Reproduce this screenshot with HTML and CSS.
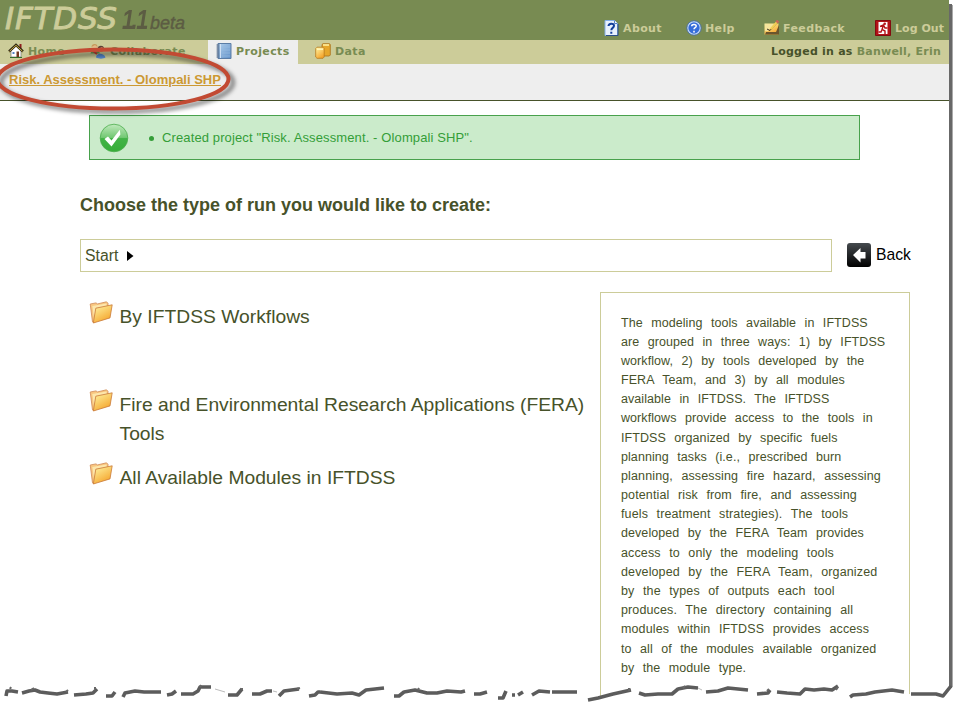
FILE: index.html
```html
<!DOCTYPE html>
<html lang="en">
<head>
<meta charset="utf-8">
<title>IFTDSS - Projects</title>
<link rel="stylesheet" href="styles.css">
</head>
<body>
<svg width="0" height="0" class="defs" aria-hidden="true">
  <defs>
    <linearGradient id="gold" x1="0" y1="0" x2=".6" y2="1"><stop offset="0" stop-color="#fff8a8"/><stop offset="1" stop-color="#f5a52c"/></linearGradient>
    <linearGradient id="ok" x1="0" y1="0" x2="0" y2="1"><stop offset="0" stop-color="#c0eabd"/><stop offset=".48" stop-color="#73c873"/><stop offset=".52" stop-color="#42b346"/><stop offset="1" stop-color="#36ad38"/></linearGradient>
    <linearGradient id="dark" x1="0" y1="0" x2="0" y2="1"><stop offset="0" stop-color="#454a4e"/><stop offset="1" stop-color="#000"/></linearGradient>
    <linearGradient id="blue" x1="0" y1="0" x2="1" y2="1"><stop offset="0" stop-color="#b3d0ec"/><stop offset="1" stop-color="#5f8fc8"/></linearGradient>
    <symbol id="folder" viewBox="0 0 24 24">
      <path d="M1.200 4 7 2.900l1.500 1L17.500 1.800l1.500 1.500V6L5 22.700l-1.500-.8z" fill="#f8c680" stroke="#cf8a55" stroke-width=".8"/>
      <path d="M3.300 6 17.500 3.500l.2 3L7 8 5 18z" fill="#fde7ac"/>
      <path d="M6.800 8.200 23.200 4.800 21 17.900 4.300 23z" fill="url(#gold)" stroke="#c97a3a" stroke-width=".8"/>
    </symbol>
  </defs>
</svg>
<div class="page">
  <header class="top">
    <div class="brand"><span class="name">IFTDSS</span><span class="ver">1<i>.</i>1</span><span class="beta">beta</span></div>
    <nav class="tools">
      <a class="about"><svg width="16" height="16" viewBox="0 0 16 16"><path d="M1 .5h9.500l3 3v12H1z" fill="#e8f1fd" stroke="#84aee6"/><path d="M10.500.5v3h3" fill="#fff" stroke="#5580c0"/><path d="M14 4v11.600H2" fill="none" stroke="#24477f"/><path d="M4.500 6C4.600 3 10 2.800 10 5.800 10 8 7.300 7.700 7.300 10.200M7.300 11.800v2" fill="none" stroke="#123f9c" stroke-width="2"/></svg>About</a>
      <a class="help"><svg width="16" height="16" viewBox="0 0 16 16"><circle cx="8" cy="8" r="6.300" fill="#356ddb" stroke="#c7dcf8" stroke-width="1.300"/><circle cx="8" cy="8" r="7.200" fill="none" stroke="#3b67bb" stroke-width=".7"/><path d="M5.700 6.200C5.900 3.800 10.300 4 10.200 6.200 10.100 7.800 8 7.500 8 9.300M8 10.800v1.600" fill="none" stroke="#fff" stroke-width="1.500"/></svg>Help</a>
      <a class="feedback"><svg width="16" height="16" viewBox="0 0 16 16"><path d="M.5 3.500h14v11H.5z" fill="url(#gold)"/><path d="M1 14.500h14V5l-3 7H2z" fill="#6b552d"/><path d="M1 4h9L4 11H1z" fill="#f6e59c"/><path d="m3 9 3 1.500L14 2" fill="none" stroke="#3d331d"/><path d="m7 9 6-7" stroke="#f1cf55" stroke-width="2"/><path d="m12.500 2.500 1.700-1.800" stroke="#ca6656" stroke-width="3"/></svg>Feedback</a>
      <a class="logout"><svg width="16" height="16" viewBox="0 0 16 16"><path d="M.5.5h15v15H.5z" fill="#b31217" stroke="#820b0f"/><path d="M3.500 2h9v12h-9z" fill="#fff"/><circle cx="9.700" cy="3.800" r="1.300" fill="#b31217"/><path d="M5 6.500 8.500 5l1.500 3h2.500M8.400 5.500 7 9.500l3 1.500v3M7.200 9 6 12H3.500" fill="none" stroke="#b31217" stroke-width="1.400"/></svg>Log Out</a>
    </nav>
  </header>
  <div class="menu">
    <nav class="tabs">
      <a class="tab home"><svg width="16" height="16" viewBox="0 0 16 16"><path d="M11.500 1h2v5h-2z" fill="#8d1c1c"/><path d="M3 7.500 8 3l5 4.500V14H3z" fill="#fff" stroke="#777" stroke-width=".7"/><path d="M1 8.500 8 2l7 6.500" fill="none" stroke="#332c16" stroke-width="2.400"/><path d="M1.500 8.300 8 2.300l6.500 6" fill="none" stroke="#ebc74d" stroke-width=".8"/><path d="M4.500 9h2v2h-2z" fill="#5482c0"/><path d="M8.500 8.500H11V14H8.500z" fill="#71371f"/><path d="M2 14.500h12" stroke="#326c27"/></svg>Home</a>
      <a class="tab collab"><svg width="16" height="16" viewBox="0 0 16 16"><path d="M.5 10.500 2 6h6l2 4.500z" fill="#679b50"/><circle cx="4.500" cy="4" r="3" fill="#e2b988"/><path d="M1.500 4C1.500 0 8 0 7.500 4L5 2z" fill="#c29a5c"/><path d="M6 14.500c0-5 8-5 9.500 0-2 1.500-7 1.500-9.500 0" fill="#5789ce"/><circle cx="10.800" cy="6" r="3" fill="#c9865c"/><path d="M7.500 6c0-4.500 7-4.500 6.500 0l-2-2z" fill="#5b4238"/><path d="m3 8 4 3" stroke="#c23e34" stroke-width="2"/></svg>Collaborate</a>
      <a class="tab projects"><svg width="16" height="16" viewBox="0 0 16 16"><path d="M2 .5h13v15H2z" fill="url(#blue)" stroke="#5c7da5"/><path d="M4.500 1v14" stroke="#d1e1f4"/><path d="M6 4h8M6 7h8M6 10h8M6 13h8" stroke="#9abce0" stroke-width=".7"/><path d="M.5 2h3M.5 4h3M.5 6h3M.5 8h3M.5 10h3M.5 12h3M.5 14h3" stroke="#526987"/></svg>Projects</a>
      <a class="tab data"><svg width="16" height="16" viewBox="0 0 16 16"><path d="M7 1.500 8 .7h6.500l.8 1V12l-1 1H7z" fill="#e6a72b" stroke="#a8701c" stroke-width=".8"/><path d="M8 2h6" stroke="#fff0a0" stroke-width="1.600"/><path d="M.7 5.500 2 4.200h6l1.200 1.300V14L8 15.300H2L.7 14z" fill="url(#gold)" stroke="#b8781d" stroke-width=".8"/><path d="M2 6.200h6" stroke="#fff7bb" stroke-width="1.500"/></svg>Data</a>
    </nav>
    <div class="user">Logged in as <span>Banwell, Erin</span></div>
  </div>
  <div class="crumb"><a>Risk. Assessment. - Olompali SHP</a></div>
  <main>
    <div class="notice">
      <svg width="30" height="30" viewBox="0 0 30 30"><circle cx="15" cy="15" r="13.800" fill="url(#ok)" stroke="#4bad4c" stroke-width=".8"/><path d="M5.500 16 9 13.500l3.500 4L20.800 6.800l.6 4.700-8.900 12z" fill="#fff"/></svg>
      <span class="dot"></span><span class="msg">Created project "Risk. Assessment. - Olompali SHP".</span>
    </div>
    <h1>Choose the type of run you would like to create:</h1>
    <div class="path-row">
      <div class="path"><span>Start</span><svg width="8" height="12" viewBox="0 0 8 12"><path d="M1 1 7.500 6 1 11z" fill="#000"/></svg></div>
      <a class="back"><svg width="24" height="24" viewBox="0 0 24 24"><rect width="24" height="24" rx="3" fill="url(#dark)"/><path d="m6 12 7.500-7v4H18.500v6.500H13.500v4z" fill="#fff"/></svg><span>Back</span></a>
    </div>
    <div class="columns">
      <ul class="runs">
        <li class="first"><svg width="24" height="24"><use href="#folder"/></svg><span>By IFTDSS Workflows</span></li>
        <li class="second"><svg width="24" height="24"><use href="#folder"/></svg><span>Fire and Environmental Research Applications (FERA)<br>Tools</span></li>
        <li class="third"><svg width="24" height="24"><use href="#folder"/></svg><span>All Available Modules in IFTDSS</span></li>
      </ul>
      <aside>The modeling tools available in IFTDSS<br>are grouped in three ways: 1) by IFTDSS<br>workflow, 2) by tools developed by the<br>FERA Team, and 3) by all modules<br>available in IFTDSS. The IFTDSS<br>workflows provide access to the tools in<br>IFTDSS organized by specific fuels<br>planning tasks (i.e., prescribed burn<br><span class="wide">planning, assessing fire hazard, assessing</span><br><span class="wide">potential risk from fire, and assessing</span><br><span class="wide">fuels treatment strategies). The tools</span><br>developed by the FERA Team provides<br><span class="wide">access to only the modeling tools</span><br><span class="wide">developed by the FERA Team, organized</span><br><span class="wide">by the types of outputs each tool</span><br><span class="wide">produces. The directory containing all</span><br><span class="wide">modules within IFTDSS provides access</span><br>to all of the modules available organized<br>by the module type.</aside>
    </div>
  </main>
</div>
<svg class="overlay" width="957" height="708" viewBox="0 0 957 708" aria-hidden="true">
  <defs>
    <filter id="soft" x="-10%" y="-30%" width="120%" height="170%"><feGaussianBlur stdDeviation="2"/></filter>
    <filter id="edge" x="-5%" y="-50%" width="110%" height="200%"><feGaussianBlur stdDeviation=".65"/></filter>
  </defs>
  <path d="M949 4h3v684h-3z" fill="#686868"/><path d="M952.500 5v682" stroke="#aaa"/>
  <path d="M0 690 20 691 50 692 75 694 100 690 125 693 160 690 180 693 205 687 230 692 245 688 270 691 300 688 340 693 360 695 385 688 410 691 460 693 500 697 530 692 580 692 589 699 630 690 660 694 700 687 730 688 760 693 800 691 850 696 890 691 908 694 943 695 949 686V708H0z" fill="#fff"/>
  <g class="tear" filter="url(#edge)">
    <path d="m6 696 1-5 5 0 6 1M22 693l7-2 6-1 5 2 8 1 9 1 11-2M74 695l12-1 7-1 4-4M106 696l6 0 3-4M123 697l2-4 10-2 9 1 17 0M167 695l5-1 4-3M181 694l12 0 5-3 2-4 11 0M228 695l9 0 5-6M252 694l8 0 7-3 5 0M279 696l5-5 15-2M309 696l6-1 3-3 2 0"/>
    <path d="m320 692 17 2 15-1 7 2 7-5 18-2M394 696l5 0 5-4 11-2 12 3 10 0 10-2 14 1 4-1M474 694l6 0 7-2M498 698l5 0 3-7M512 695l3 0M518 695l5-3M532 695l7-4 11 1M552 692l13 0 9 0 3 0M588 700l10-2 15-4 18-4"/>
    <path d="m639 693 6 2 13-1 14 0 6-5 10-2 10 1M706 692l12-1 10-3 20 2M757 694l11-1 2-3M777 692l10 1 13 1 5-5 9 1 10-1 8 1 6-4M850 697l3-2 13-1 9-2 17-2 12 2M911 694l13 0 12 0 7 2 8-10"/>
  </g>
  <g class="link"><path d="m215 689 10 3M273 691l4 1M698 688l4 2"/></g>
  <g class="crumbs"><path d="m10 689 1-2M31 690l3-2M95 689v-2M66 692l2-2M200 687l1-2M242 690v-2M297 689l3-1M418 690l1-2M629 691v-3M683 688l2-2M767 691l2-2M836 690l2-3"/></g>
  <ellipse cx="117" cy="82.500" rx="116" ry="29" fill="none" stroke="#000" stroke-opacity=".5" stroke-width="4" filter="url(#soft)"/>
  <ellipse cx="113" cy="79" rx="115.500" ry="29.500" fill="none" stroke="#c24a33" stroke-width="4"/>
</svg>
</body>
</html>
```
FILE: styles.css
```css
* { box-sizing: border-box; }
body { margin: 0; width: 957px; height: 708px; overflow: hidden; background: #fff; color: #47522a; font-family: "Liberation Sans", Arial, sans-serif; }
.defs { position: absolute; }
.page { width: 949px; height: 708px; overflow: hidden; }
svg { flex: none; }
.top { height: 40px; background: #788b52; display: flex; justify-content: space-between; }
.brand { display: flex; align-items: baseline; height: 40px; padding-left: 5px; font-style: italic; white-space: nowrap; line-height: 34px; }
.name { width: 117px; color: #cccc99; font: italic 31px/36px "DejaVu Sans", sans-serif; -webkit-text-stroke: .9px #cccc99; letter-spacing: .8px; }
.ver { width: 28px; color: #5c5c43; font-size: 28px; font-weight: bold; letter-spacing: -2.500px; transform: scaleX(.78); transform-origin: 0 0; }
.ver i { margin: 0 1px 0 -1px; }
.beta { color: #5c5c43; font-size: 18px; -webkit-text-stroke: .4px #5c5c43; }
.tools, .tabs, .user { font: bold 11px/16px "DejaVu Sans", sans-serif; letter-spacing: .38px; white-space: nowrap; }
.tools { display: flex; padding: 20px 0 0; color: #cccc99; }
.tools a { display: flex; gap: 3px; line-height: 18px; }
.tools a svg { width: 16px; }
.about { width: 82px; }
.help { width: 78px; }
.feedback { width: 111px; }
.tools .logout { width: 74px; gap: 4px; letter-spacing: .05px; }
.menu { height: 24px; background: #cccc99; display: flex; justify-content: space-between; color: #788b52; }
.tabs { display: flex; }
.tab { display: flex; align-items: center; height: 24px; padding-left: 8px; gap: 4px; }
.tab svg { margin-top: -2px; }
.home { width: 82px; }
.collab { width: 126px; }
.projects { width: 90px; background: #eee; }
.data { width: 80px; padding-left: 17px; }
.user { padding: 4px 8px 0 0; color: #47522a; letter-spacing: .23px; }
.user span { color: #788b52; }
.crumb { height: 37px; background: #eee; border-bottom: 1px solid #47522a; padding: 6px 0 0 9px; }
.crumb a { display: inline-block; color: #cc9933; font-size: 13px; line-height: 16px; font-weight: bold; text-decoration: underline; white-space: nowrap; }
main { padding: 14px 0 0 80px; }
.notice { margin-left: 9px; width: 771px; height: 45px; border: 1px solid #48a14c; background: #cbebcb; color: #349e38; display: flex; align-items: center; padding-left: 9px; font-size: 13px; }
.dot { width: 5px; height: 5px; border-radius: 50%; background: #349e38; margin: 1px 8px 0 20px; }
.msg { white-space: nowrap; letter-spacing: .12px; }
h1 { margin: 33px 0 0; height: 46px; font-size: 18px; line-height: 24px; white-space: nowrap; }
.path-row { display: flex; gap: 15px; align-items: center; height: 33px; }
.path { width: 752px; height: 33px; border: 1px solid #cccc99; display: flex; align-items: center; gap: 8px; padding-left: 4px; font-size: 15.800px; }
.back { display: flex; align-items: center; gap: 5px; color: #000; font-size: 15.700px; height: 30px; margin-top: -2px; }
.columns { display: flex; padding-top: 20px; }
.runs { list-style: none; margin: 0; padding: 8px 0 0 9px; width: 520px; font-size: 19.280px; line-height: 29px; }
.runs li { display: flex; gap: 6.500px; white-space: nowrap; }
.runs span { padding-top: 2px; }
.first { height: 88px; }
.second { height: 73px; }
aside { width: 310px; height: 420px; border: 1px solid #cccc99; padding: 20.600px 0 0 20px; font-size: 12.500px; line-height: 19.170px; word-spacing: 4.900px; letter-spacing: .07px; white-space: nowrap; }
.wide { letter-spacing: .13px; }
.overlay { position: absolute; left: 0; top: 0; }
.tear { fill: none; stroke: #5c5c5c; stroke-width: 3.600; stroke-linejoin: round; }
.link { fill: none; stroke: #bbb; stroke-width: 1; }
.crumbs { fill: none; stroke: #686868; stroke-width: 2; }
```
